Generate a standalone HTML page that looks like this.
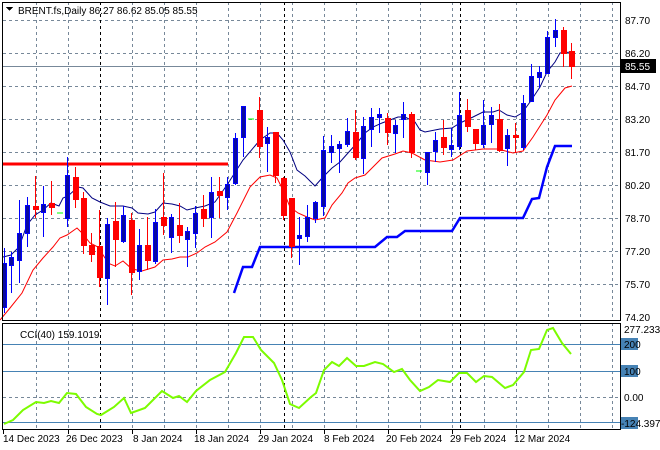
<!DOCTYPE html>
<html><head><meta charset="utf-8"><style>
html,body{margin:0;padding:0;background:#fff;width:660px;height:450px;overflow:hidden}
svg{display:block}
text{font-family:"Liberation Sans",sans-serif;font-size:10px;fill:#000}
</style></head><body>
<svg width="660" height="450" viewBox="0 0 660 450" shape-rendering="crispEdges">
<rect width="660" height="450" fill="#fff"/>
<!-- grid main -->
<g stroke="#778899" stroke-dasharray="3,3" stroke-width="1">
<path d="M3 20.5H620M3 53.5H620M3 86.5H620M3 119.5H620M3 152.5H620M3 185.5H620M3 218.5H620M3 251.5H620M3 284.5H620"/>
<path d="M36.5 2V320M68.5 2V320M132.5 2V320M164.5 2V320M196.5 2V320M228.5 2V320M260.5 2V320M292.5 2V320M324.5 2V320M356.5 2V320M388.5 2V320M420.5 2V320M452.5 2V320M484.5 2V320M516.5 2V320M548.5 2V320M580.5 2V320M612.5 2V320"/>
<path d="M36.5 323V430M68.5 323V430M132.5 323V430M164.5 323V430M196.5 323V430M228.5 323V430M260.5 323V430M292.5 323V430M324.5 323V430M356.5 323V430M388.5 323V430M420.5 323V430M452.5 323V430M484.5 323V430M516.5 323V430M548.5 323V430M580.5 323V430M612.5 323V430M3 397.5H620"/>
</g>
<g stroke="#000" stroke-dasharray="3,3"><path d="M100.5 2V320M284.5 2V320M460.5 2V320M100.5 323V430M284.5 323V430M460.5 323V430"/></g>
<path d="M3 66.5H620" stroke="#778899"/>
<!-- red horizontal -->
<path d="M3 164H228" stroke="#ff0000" stroke-width="3"/>
<!-- blue step line -->
<path shape-rendering="auto" d="M234 293L243 267L252 267L260 247L375 247L387 237L397 237L405 231L452 231L460 218L523 218L532 199L539 198L547 167L555 146L572 146" fill="none" stroke="#0000ff" stroke-width="2.5"/>
<!-- red MA -->
<path shape-rendering="auto" d="M0 320L10 308L22 293L33 270L43 258L53 247L60 238L67 235L77 228L82 233L90 243L98 247L105 258L110 264L115 266L123 261L132 269L142 271L155 267L163 260L172 259L180 257L188 257L197 253L205 247L215 242L227 232L237 213L250 187L260 177L270 175L277 178L283 190L290 207L298 213L307 217L315 220L325 218L332 205L342 193L348 183L355 178L365 175L373 167L382 158L395 154L403 151L412 153L425 160L440 162L453 160L467 151L483 149L498 149L513 153L523 151L533 137L547 115L555 100L565 88L572 86" fill="none" stroke="#ff0000" stroke-width="1"/>
<!-- navy MA -->
<path shape-rendering="auto" d="M3 257L11 255L19 247L27 225L35 215L43 210L51 203L59 206L63 198L68 196L78 187L83 188L92 198L100 202L110 206L123 206L132 208L138 213L148 214L155 212L163 203L172 204L180 206L187 210L195 208L205 206L215 202L227 185L243 160L260 140L270 133L277 133L283 140L290 152L297 170L305 176L315 186L323 177L332 168L340 162L348 153L357 143L365 133L373 127L382 123L390 120L398 117L405 117L415 122L420 130L425 132L440 129L452 128L460 123L473 117L483 112L493 112L499 110L507 115L515 117L522 113L530 102L540 87L547 72L555 62L560 53L572 52" fill="none" stroke="#000080" stroke-width="1"/>
<!-- wicks -->
<path stroke="#0000ff" d="M4.5 248V313M11.5 252V293M19.5 200V283M27.5 197V247M43.5 186V237M67.5 157V227M107.5 218V305M123.5 206V243M139.5 229V280M155.5 209V264M171.5 214V253M187.5 227V267M195.5 206V248M211.5 177V238M227.5 177V210M235.5 133V185M243.5 106V157M267.5 127V172M299.5 217V265M307.5 205V242M315.5 201V223M323.5 136V216M331.5 135V163M339.5 141V173M347.5 118V147M363.5 117V174M371.5 108V147M379.5 108V133M395.5 120V153M403.5 102V138M427.5 152V185M435.5 132V162M451.5 128V157M459.5 92V150M483.5 100V148M491.5 107V143M507.5 129V166M523.5 95V150M531.5 64V102M539.5 66V88M547.5 31V73M555.5 19V47"/>
<path stroke="#ff0000" d="M35.5 176V218M51.5 181V215M75.5 167V208M83.5 192V254M91.5 233V262M99.5 210V287M115.5 202V267M131.5 213V295M147.5 217V270M163.5 173V235M179.5 203V243M203.5 195V227M219.5 177V218M259.5 97V158M275.5 132V183M283.5 177V220M291.5 198V258M355.5 110V160M387.5 113V145M411.5 112V158M443.5 120V155M467.5 99V132M475.5 129V150M499.5 104V152M515.5 123V152M563.5 27V67M571.5 43V79"/>
<!-- bodies -->
<g fill="#0a0aa0" stroke="#0000ff" stroke-width="1">
<rect x="2.5" y="263.5" width="4" height="44"/><rect x="9.5" y="257.5" width="4" height="8"/><rect x="17.5" y="233.5" width="4" height="27"/><rect x="25.5" y="205.5" width="4" height="28"/><rect x="41.5" y="204.5" width="4" height="8"/><rect x="65.5" y="175.5" width="4" height="43"/><rect x="105.5" y="224.5" width="4" height="54"/><rect x="121.5" y="215.5" width="4" height="26"/><rect x="137.5" y="245.5" width="4" height="26"/><rect x="153.5" y="222.5" width="4" height="39"/><rect x="169.5" y="217.5" width="4" height="20"/><rect x="185.5" y="231.5" width="4" height="8"/><rect x="193.5" y="213.5" width="4" height="20"/><rect x="209.5" y="192.5" width="4" height="25"/><rect x="225.5" y="184.5" width="4" height="13"/><rect x="233.5" y="138.5" width="4" height="45"/><rect x="241.5" y="106.5" width="4" height="31"/><rect x="265.5" y="137.5" width="4" height="6"/><rect x="297.5" y="235.5" width="4" height="3"/><rect x="305.5" y="217.5" width="4" height="19"/><rect x="313.5" y="202.5" width="4" height="16"/><rect x="321.5" y="150.5" width="4" height="56"/><rect x="329.5" y="146.5" width="4" height="6"/><rect x="337.5" y="144.5" width="4" height="4"/><rect x="345.5" y="131.5" width="4" height="13"/><rect x="361.5" y="126.5" width="4" height="32"/><rect x="369.5" y="117.5" width="4" height="12"/><rect x="377.5" y="114.5" width="4" height="3"/><rect x="393.5" y="125.5" width="4" height="8"/><rect x="401.5" y="114.5" width="4" height="5"/><rect x="425.5" y="152.5" width="4" height="20"/><rect x="433.5" y="140.5" width="4" height="11"/><rect x="449.5" y="145.5" width="4" height="4"/><rect x="457.5" y="115.5" width="4" height="31"/><rect x="481.5" y="125.5" width="4" height="19"/><rect x="489.5" y="115.5" width="4" height="9"/><rect x="505.5" y="135.5" width="4" height="13"/><rect x="521.5" y="103.5" width="4" height="44"/><rect x="529.5" y="76.5" width="4" height="25"/><rect x="537.5" y="72.5" width="4" height="5"/><rect x="545.5" y="37.5" width="4" height="36"/><rect x="553.5" y="30.5" width="4" height="7"/>
</g>
<g fill="#ff0000">
<rect x="33" y="206" width="6" height="4"/><rect x="49" y="203" width="6" height="5"/><rect x="73" y="177" width="6" height="23"/><rect x="81" y="198" width="6" height="48"/><rect x="89" y="245" width="6" height="10"/><rect x="97" y="246" width="6" height="32"/><rect x="113" y="221" width="6" height="19"/><rect x="129" y="220" width="6" height="53"/><rect x="145" y="245" width="6" height="16"/><rect x="161" y="217" width="6" height="9"/><rect x="177" y="225" width="6" height="11"/><rect x="201" y="209" width="6" height="10"/><rect x="217" y="191" width="6" height="5"/><rect x="257" y="110" width="6" height="37"/><rect x="273" y="132" width="6" height="44"/><rect x="281" y="178" width="6" height="38"/><rect x="289" y="198" width="6" height="49"/><rect x="353" y="132" width="6" height="26"/><rect x="385" y="118" width="6" height="15"/><rect x="409" y="114" width="6" height="39"/><rect x="441" y="137" width="6" height="11"/><rect x="465" y="110" width="6" height="17"/><rect x="473" y="129" width="6" height="15"/><rect x="497" y="119" width="6" height="32"/><rect x="513" y="135" width="6" height="3"/><rect x="561" y="30" width="6" height="24"/><rect x="569" y="51" width="6" height="16"/>
</g>
<path d="M57 213H63M248 119H254M416 171H422" stroke="#00ff00"/>
<!-- frames -->
<rect x="2.5" y="2.5" width="618" height="318" fill="none" stroke="#000"/>
<!-- CCI -->
<path d="M3 344.5H620M3 371.5H620M3 422.5H620" stroke="#4682b4"/>
<path shape-rendering="auto" d="M4 424L13 420L23 410L36 402L44 403L51 401L59 403L67 393L76 394L86 407L97 414L101 415L114 407L124 398L131 413L145 408L162 391L173 398L179 396L187 402L196 391L210 380L225 372L236 353L244 337L253 337L261 350L274 363L282 380L290 404L299 408L311 397L316 393L324 370L332 362L339 366L347 358L356 366L364 366L375 362L383 364L394 372L402 369L410 380L420 391L429 387L438 380L450 382L459 373L467 373L476 382L484 376L492 377L505 388L513 385L524 372L531 350L539 349L547 330L553 328L562 343L571 354" fill="none" stroke="#7cfc00" stroke-width="2"/>
<rect x="2.5" y="323.5" width="618" height="106" fill="none" stroke="#000"/>
<!-- right axis -->
<g>
<text x="625" y="24">87.70</text><text x="625" y="57">86.20</text><text x="625" y="90">84.70</text><text x="625" y="123">83.20</text><text x="625" y="156">81.70</text><text x="625" y="189">80.20</text><text x="625" y="222">78.70</text><text x="625" y="255">77.20</text><text x="625" y="288">75.70</text><text x="625" y="321">74.20</text>
</g>
<rect x="621" y="59" width="35" height="14" fill="#000"/>
<text x="625" y="70" style="fill:#fff">85.55</text>
<text x="624" y="333">277.233</text>
<rect x="621" y="338" width="17" height="12" fill="#4682b4"/><text x="624" y="348">200</text>
<rect x="621" y="365" width="17" height="12" fill="#4682b4"/><text x="624" y="375">100</text>
<text x="624" y="401">0.00</text>
<rect x="621" y="417" width="17" height="12" fill="#4682b4"/><text x="621" y="427">-124.397</text>
<!-- title -->
<path d="M6 7H13L9.5 11Z" fill="#000"/>
<text x="18" y="14">BRENT.fs,Daily  86.27 86.62 85.05 85.55</text>
<text x="20" y="338">CCI(40) 159.1019</text>
<!-- date ticks -->
<path d="M3.5 430V434M68.5 430V434M132.5 430V434M196.5 430V434M260.5 430V434M324.5 430V434M388.5 430V434M452.5 430V434M516.5 430V434" stroke="#000"/>
<g>
<text x="3" y="442">14 Dec 2023</text><text x="66" y="442">26 Dec 2023</text><text x="133" y="442">8 Jan 2024</text><text x="194" y="442">18 Jan 2024</text><text x="258" y="442">29 Jan 2024</text><text x="324" y="442">8 Feb 2024</text><text x="386" y="442">20 Feb 2024</text><text x="450" y="442">29 Feb 2024</text><text x="514" y="442">12 Mar 2024</text>
</g>
</svg>
</body></html>
